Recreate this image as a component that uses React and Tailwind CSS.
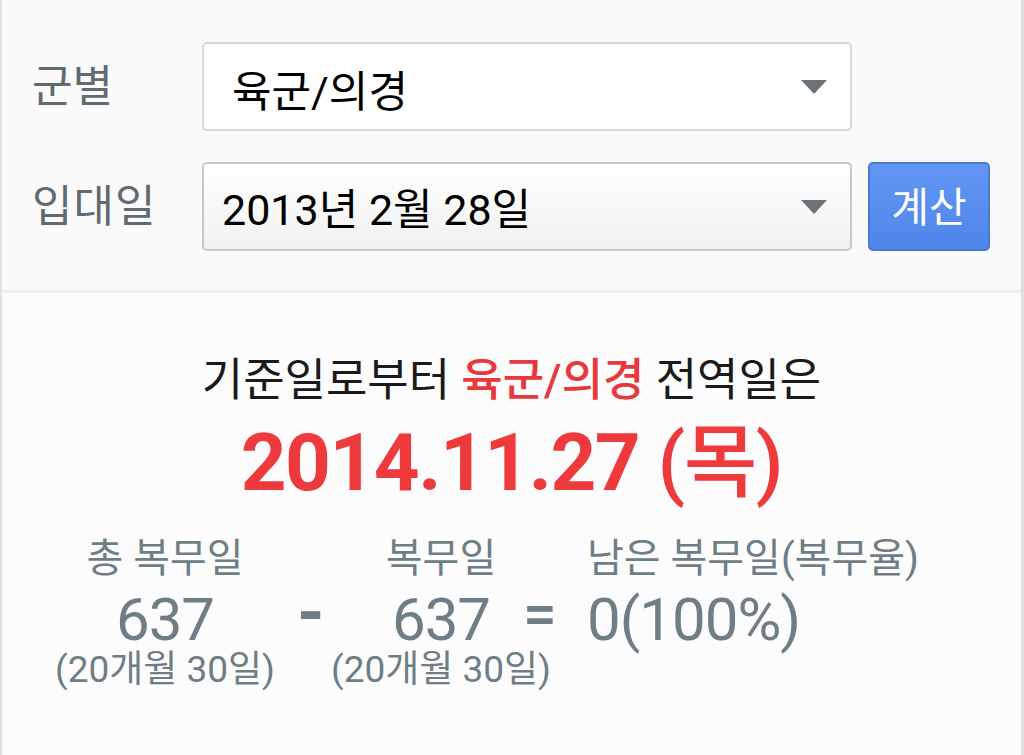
import React from 'react';

const FONT = "font-['Roboto','Noto_Sans_CJK_KR',sans-serif]";

function Caret() {
  return (
    <svg width="26" height="14" viewBox="0 0 26 14" className="shrink-0">
      <path d="M0 0 H26 L13 14 Z" fill="#6b7378" />
    </svg>
  );
}

function SelectBox({ value, gradient, textClass }) {
  return (
    <div
      className={`flex items-center justify-between w-[650px] h-[89px] rounded-[5px] border-2 pr-[23px] ${
        gradient
          ? 'border-[#c6c8c9] bg-gradient-to-b from-white to-[#f1f1f1]'
          : 'border-[#d7d9da] bg-white'
      }`}
    >
      <span className={`text-black text-[43px] leading-none ${textClass}`}>{value}</span>
      <Caret />
    </div>
  );
}

function Stat({ label, value, sub, width }) {
  return (
    <div className={`flex flex-col items-center ${width}`}>
      <span className="text-[40px] leading-[48px] whitespace-nowrap">{label}</span>
      <span className="text-[60px] leading-[60px] mt-[7px] tracking-[-1px]">{value}</span>
      <span className="text-[37px] leading-[40px] whitespace-nowrap">{sub}</span>
    </div>
  );
}

export default function App() {
  return (
    <div className={`w-[1024px] h-[755px] flex flex-col bg-[#fafafa] border-l-2 border-r-[3px] border-[#dde1e2] ${FONT}`}>
      {/* Form */}
      <div className="h-[293px] shrink-0 border-b-[3px] border-[#eeeeee] pt-[42px] flex flex-col gap-[31px]">
        <div className="flex items-center">
          <span className="w-[200px] pl-[30px] text-[44px] leading-none text-[#5f6b70]">군별</span>
          <SelectBox value="육군/의경" textClass="pl-[28px] mt-[12px]" />
        </div>
        <div className="flex items-center">
          <span className="w-[200px] pl-[30px] text-[44px] leading-none text-[#5f6b70] tracking-[1px]">입대일</span>
          <SelectBox value="2013년 2월 28일" gradient textClass="pl-[18px] mt-[8px]" />
          <button className="ml-[16px] w-[122px] h-[89px] rounded-[5px] border-2 border-[#4878d8] bg-gradient-to-b from-[#6196f3] to-[#5086ea] text-white text-[41px] leading-none pt-[4px]">
            계산
          </button>
        </div>
      </div>

      {/* Result */}
      <div className="flex-1 bg-[#fcfcfc] flex flex-col items-center pt-[60px]">
        <p className="text-[45px] leading-[56px] text-[#1a1a1a] whitespace-nowrap">
          기준일로부터 <span className="font-medium text-[#e8383d]">육군/의경</span> 전역일은
        </p>
        <p className="text-[80px] leading-[90px] text-[#ef3a3d] mt-[9px] whitespace-nowrap tracking-[-1.5px]">
          <span className="font-bold">2014.11.27</span> <span className="font-medium">(목)</span>
        </p>

        <div className="self-start flex text-[#6f7e85] mt-[27px] pl-[53px]">
          <Stat label="총 복무일" value="637" sub="(20개월 30일)" width="w-[220px]" />
          <span className="w-[84px] pl-[22px] text-[70px] leading-[60px] font-bold mt-[48px]">-</span>
          <Stat label="복무일" value="637" sub="(20개월 30일)" width="w-[164px]" />
          <span className="w-[64px] text-[60px] leading-[60px] font-medium mt-[49px]">=</span>
          <div className="flex flex-col items-start">
            <span className="text-[40px] leading-[48px] whitespace-nowrap">남은 복무일(복무율)</span>
            <span className="text-[60px] leading-[60px] mt-[7px] tracking-[-1px]">0(100%)</span>
          </div>
        </div>
      </div>
    </div>
  );
}
